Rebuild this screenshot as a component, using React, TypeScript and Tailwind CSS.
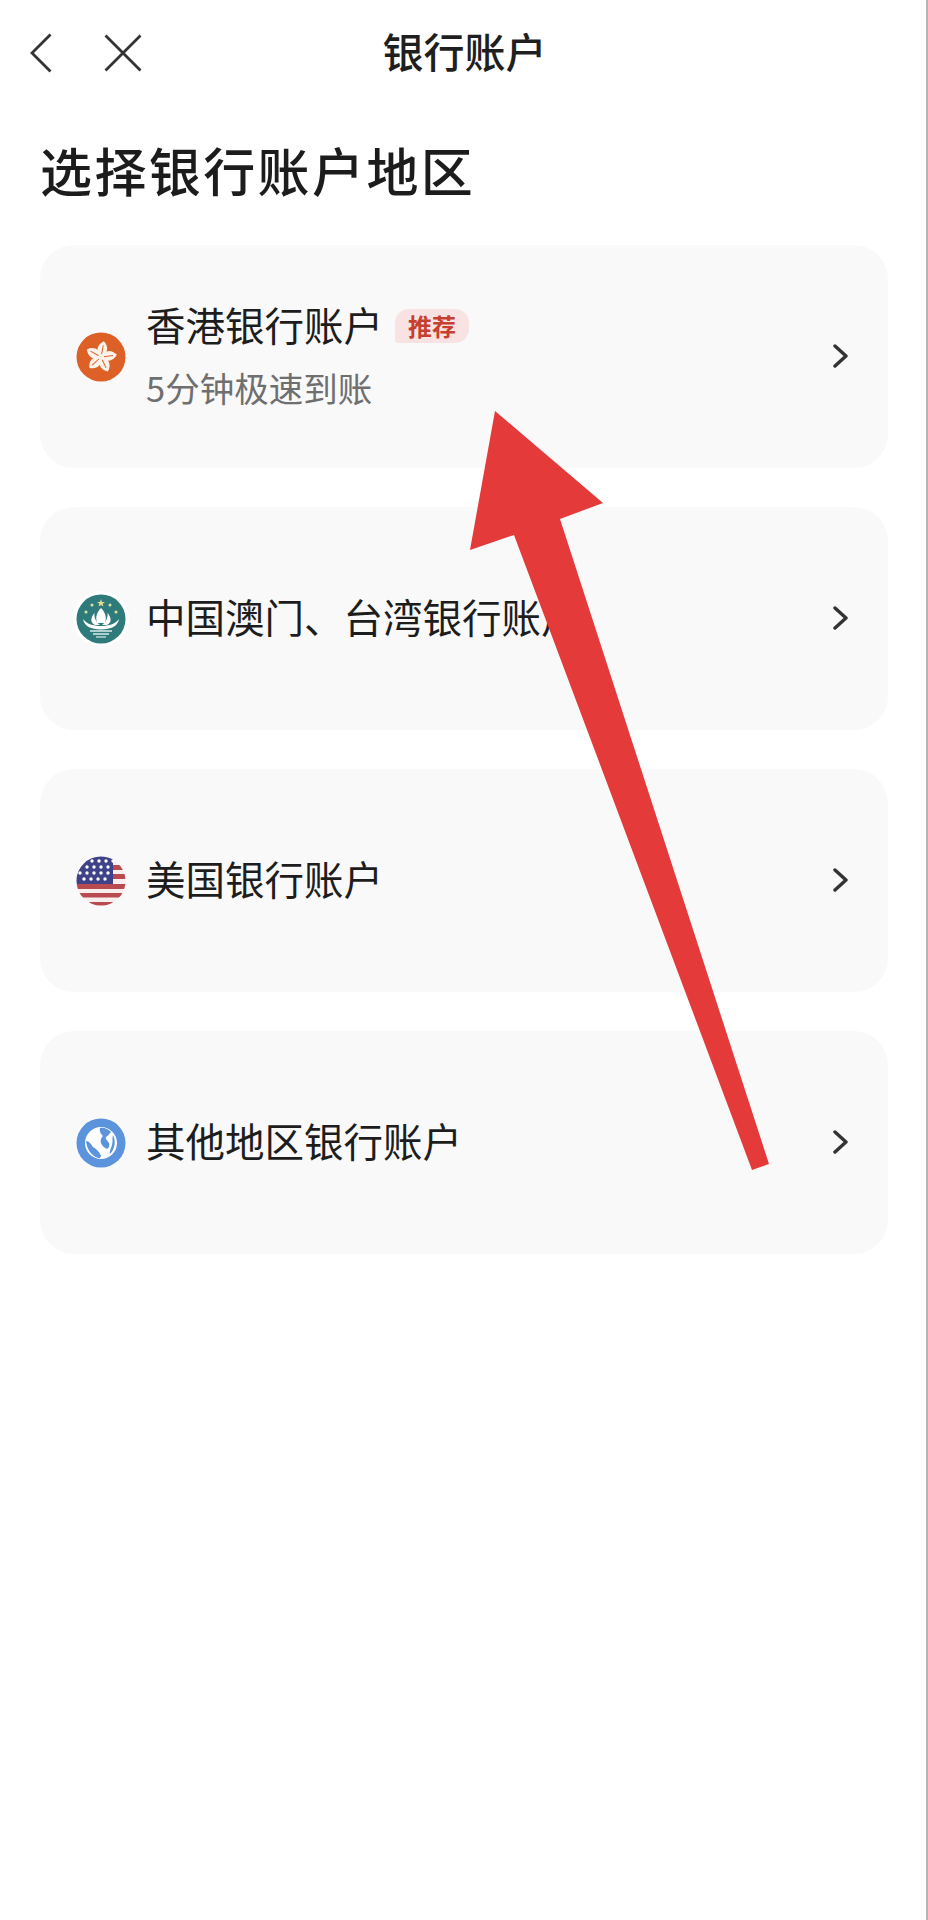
import { ReactNode } from "react"

const HkIcon = () => (
  <svg viewBox="0 0 50 50" className="h-[50px] w-[50px] shrink-0">
    <circle cx="25" cy="25" r="24.5" fill="#dd6027" />
    {[0, 72, 144, 216, 288].map((a) => (
      <g key={a} transform={`rotate(${a + 12} 25 25)`}>
        <path d="M25 25C18.500 21 18 14 24.500 9C30.500 13 31.500 20 25 25Z" fill="#fdf3ea" />
        <path d="M25 22L24.800 13" stroke="#dd6027" strokeWidth="1" />
      </g>
    ))}
  </svg>
)

const MoIcon = () => (
  <svg viewBox="0 0 56 56" className="-m-[3px] h-[56px] w-[56px] shrink-0">
    <circle cx="28" cy="28" r="28" fill="#ffffff" />
    <circle cx="28" cy="28" r="24.5" fill="#2f7a7a" />
    <path d="M28 8L29 11H32L29.600 12.800L30.500 15.600L28 13.900L25.500 15.600L26.400 12.800L24 11H27Z" fill="#e8dc8a" />
    <circle cx="19" cy="14" r="1.500" fill="#dfe29a" />
    <circle cx="37" cy="14" r="1.500" fill="#dfe29a" />
    <circle cx="13" cy="21" r="1.500" fill="#dfe29a" />
    <circle cx="43" cy="21" r="1.500" fill="#dfe29a" />
    <path d="M28 17C32 21 34 26 32 32H24C22 26 24 21 28 17Z" fill="#ffffff" />
    <path d="M21.500 22C21 27 23 31 27 34H22C17.500 32 17 27 21.500 22Z" fill="#ffffff" />
    <path d="M34.500 22C35 27 33 31 29 34H34C38.500 32 39 27 34.500 22Z" fill="#ffffff" />
    <path d="M10 28C14 33 20 35 28 35C36 35 42 33 46 28C45 35 38 38.500 28 38.500C18 38.500 11 35 10 28Z" fill="#ffffff" />
    <path d="M17 40H39M20 43H36" stroke="#d9ebe9" strokeWidth="1.500" />
    <path d="M23 46H33" stroke="#d9ebe9" strokeWidth="1.200" />
  </svg>
)

const starRows = [
  { y: 5, xs: [16, 23, 30, 37] },
  { y: 11, xs: [11, 18, 25, 32] },
  { y: 17, xs: [4, 11, 18, 25, 32] },
  { y: 23, xs: [8, 15, 22, 29] },
]

const UsIcon = () => (
  <svg viewBox="0 0 50 50" className="h-[50px] w-[50px] shrink-0">
    <defs>
      <clipPath id="us-flag">
        <circle cx="25" cy="25" r="24.500" />
      </clipPath>
    </defs>
    <g clipPath="url(#us-flag)">
      <rect width="50" height="50" fill="#f7eeee" />
      <rect x="0" y="9" width="50" height="5" fill="#b84a50" />
      <rect x="0" y="18" width="50" height="5" fill="#b84a50" />
      <rect x="0" y="28" width="50" height="5" fill="#b84a50" />
      <rect x="0" y="37" width="50" height="4.500" fill="#b84a50" />
      <rect x="0" y="46" width="50" height="4" fill="#b84a50" />
      <rect x="0" y="0" width="37" height="28" fill="#3e4289" />
      {starRows.map((r) =>
        r.xs.map((x) => <circle key={`${r.y}-${x}`} cx={x} cy={r.y} r="1.700" fill="#ffffff" />)
      )}
    </g>
  </svg>
)

const GlobeIcon = () => (
  <svg viewBox="0 0 50 50" className="h-[50px] w-[50px] shrink-0">
    <circle cx="25" cy="25" r="24.500" fill="#5b93dd" />
    <circle cx="25" cy="25" r="16" fill="#ffffff" />
    <path d="M24 10C28 9 32 11 35 14C33 16 32 18 30 19C29 21 31 22 33 25C34 27 33 30 31 31C28 29 26 28 25 25C24 22 25 20 27 18C25 16 23 13 24 10Z" fill="#5b93dd" />
    <path d="M10 23C13 23 15 26 17 29C20 31 23 33 24 36C26 38 25 40 22 40C16 38 11 32 10 23Z" fill="#5b93dd" />
    <path d="M37 17C40 23 39 31 34 36C33 34 35 30 36 27C37 23 36 20 37 17Z" fill="#5b93dd" />
  </svg>
)

const BankRow = ({
  icon,
  title,
  badge,
  subtitle,
}: {
  icon: ReactNode
  title: string
  badge?: string
  subtitle?: string
}) => (
  <div className="flex h-[223px] items-center rounded-[34px] bg-[#f9f9fa] pl-[36px] pr-[40px]">
    {icon}
    <div className="ml-[20px] flex-1 pb-[6px]">
      <div className="flex items-center">
        <span className="text-[39.5px] leading-[52px] text-[#1d1d1d]">{title}</span>
        {badge && (
          <span className="ml-[12px] translate-y-[2px] rounded-[14px] rounded-bl-[3px] bg-[#f8e3e2] px-[13px] text-[24px] font-bold leading-[34px] text-[#c6402f]">
            {badge}
          </span>
        )}
      </div>
      {subtitle && (
        <div className="mt-[14px] text-[34.5px] leading-[46px] text-[#6f6f6f]">{subtitle}</div>
      )}
    </div>
    <svg viewBox="0 0 15 24" className="-mt-[2px] h-[24px] w-[15px] text-[#333333]" fill="none" stroke="currentColor" strokeWidth="3.400" strokeLinecap="round" strokeLinejoin="round">
      <path d="M2 2L13 12L2 22" />
    </svg>
  </div>
)

export default function App() {
  return (
    <div
      className="relative h-[1920px] w-[928px] overflow-hidden border-r-2 border-[#b5b5b5] bg-white"
      style={{ fontFamily: '"Noto Sans CJK SC", "Noto Sans", sans-serif' }}
    >
      <header className="relative flex h-[106px] items-center pl-[30px]">
        <svg viewBox="0 0 22 40" className="h-[40px] w-[22px] text-[#333333]" fill="none" stroke="currentColor" strokeWidth="2.800">
          <path d="M20.500 1.500L2 20L20.500 38.500" />
        </svg>
        <svg viewBox="0 0 38 38" className="ml-[52px] h-[38px] w-[38px] text-[#333333]" fill="none" stroke="currentColor" strokeWidth="2.800">
          <path d="M1.500 1.500L36.500 36.500M36.500 1.500L1.500 36.500" />
        </svg>
        <h1 className="absolute inset-x-0 top-[-3px] pl-[3px] text-center text-[41px] font-medium leading-[106px] text-[#1f1f1f]">
          银行账户
        </h1>
      </header>

      <h2 className="pl-[40px] pt-[29px] pb-[3px] text-[52px] font-medium leading-[70px] tracking-[2.400px] text-[#1c1c1c]">
        选择银行账户地区
      </h2>

      <div className="mt-[37px] flex flex-col gap-[39px] pl-[40px] pr-[38px]">
        <BankRow icon={<HkIcon />} title="香港银行账户" badge="推荐" subtitle="5分钟极速到账" />
        <BankRow icon={<MoIcon />} title="中国澳门、台湾银行账户" />
        <BankRow icon={<UsIcon />} title="美国银行账户" />
        <BankRow icon={<GlobeIcon />} title="其他地区银行账户" />
      </div>

      {/* red annotation arrow over the list */}
      <svg viewBox="0 0 928 1920" className="pointer-events-none absolute left-0 top-0 h-[1920px] w-[928px]">
        <polygon
          points="495,411 603,503 560,519 769,1164 752,1170 514,535 470,550"
          fill="#e43a3a"
        />
      </svg>
    </div>
  )
}
